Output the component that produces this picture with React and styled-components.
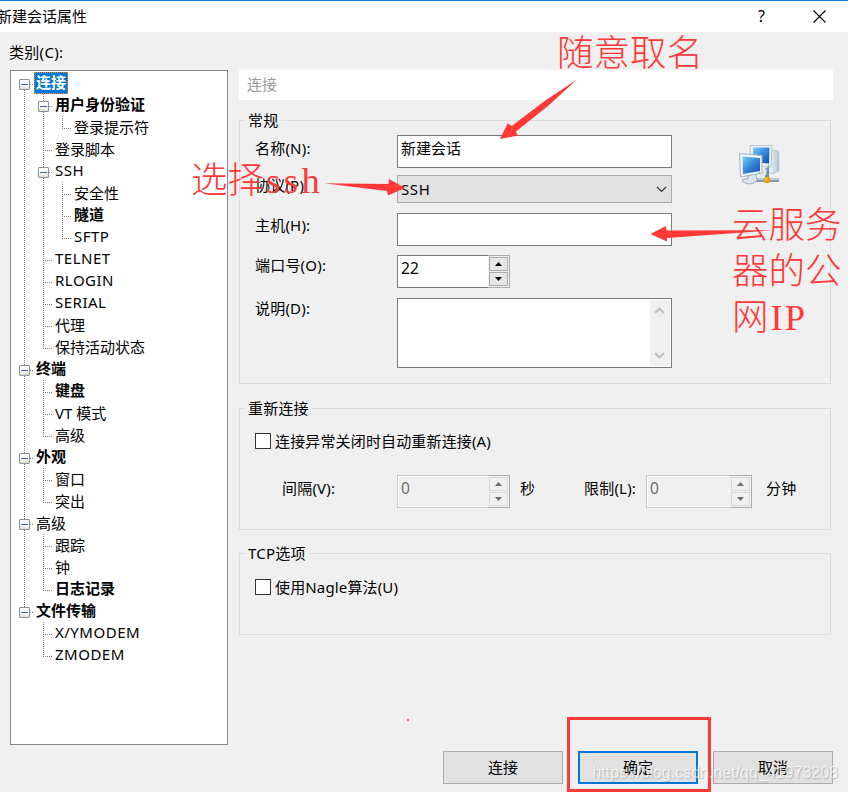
import React from 'react';
import styled, {createGlobalStyle, css} from 'styled-components'

const GlobalStyle = createGlobalStyle`
    * {
        box-sizing: border-box;
    }

    body {
        margin: 0;
        background: #f0f0f0;
        font-family: "Noto Sans", "Noto Sans CJK SC", sans-serif;
        font-size: 15px;
        line-height: 22px;
        color: #000;
        overflow: hidden;
    }
`

const Dialog = styled.div`
    position: relative;
    width: 848px;
    height: 792px;
    overflow: hidden;
    background: #f0f0f0;
    white-space: nowrap;
`

const TitleBar = styled.header`
    display: flex;
    align-items: center;
    justify-content: space-between;
    height: 32px;
    padding: 0 22px 1px 0;
    border-top: 1px solid #1a7dd1;
    background: #fff;
`

const Title = styled.div`
    margin-left: -3px;
    padding-bottom: 1px;
`

const TitleButtons = styled.div`
    display: flex;
    align-items: center;
    gap: 48px;
    font-size: 16px;

    span {
        padding-bottom: 1px;
    }

    svg {
        display: block;
    }
`

const CategoryLabel = styled.div`
    height: 38px;
    padding: 9px 0 0 9px;
    letter-spacing: 0.3px;
`

const Content = styled.div`
    display: flex;
    align-items: flex-start;
    gap: 11px;
    padding-left: 10px;
`

const Tree = styled.div`
    width: 218px;
    height: 675px;
    padding: 1px 0 0 4px;
    border: 1px solid #828790;
    background: #fff;
`

const TreeRow = styled.div`
    display: flex;
    height: 22px;
`

const vertical = 'repeating-linear-gradient(180deg, #808080 0 1px, transparent 1px 2px)'
const horizontal = 'repeating-linear-gradient(90deg, #808080 0 1px, transparent 1px 2px)'

const Guide = styled.div`
    display: flex;
    flex: none;
    width: 19px;
    height: 22px;
    padding: 7px 0 0 4px;
    background-repeat: no-repeat;
    ${({line, branch}) => {
        const start = line === 'bottom' ? 12 : 0
        const size = line === 'none' ? 0 : line === 'full' ? 22 : line === 'top' ? 13 : 10
        return css`
            background-image: ${vertical}, ${horizontal};
            background-position: 9px ${start}px, 9px 12px;
            background-size: 1px ${size}px, ${branch ? 10 : 0}px 1px;
        `
    }}
`

const Expander = styled.div`
    display: flex;
    align-items: center;
    width: 11px;
    height: 11px;
    padding: 0 1px;
    border: 1px solid #919191;
    border-radius: 1px;
    background: linear-gradient(#fff 50%, #dedede);

    &::after {
        content: '';
        width: 7px;
        height: 1px;
        background: #3f5fa8;
    }
`

const TreeLabel = styled.div`
    height: 22px;
    padding: 0 2px;
    font-weight: ${({bold}) => bold ? 700 : 400};
    line-height: ${({bold, latin}) => bold || latin ? 20 : 22}px;
    letter-spacing: ${({latin}) => latin ? 0.5 : 0}px;
    ${({selected}) => selected && css`
        padding: 0 1px;
        border: 1px dotted #ff8728;
        background: #0078d7;
        color: #fff;
        line-height: 18px;
    `}
`

const Panel = styled.main`
    width: 594px;
`

const Banner = styled.div`
    height: 30px;
    margin-bottom: 20px;
    padding: 3px 8px;
    background: #fff;
    color: #9b9b9b;
`

const Group = styled.section`
    width: 592px;
    height: ${({height}) => height}px;
    margin-bottom: ${({gap}) => gap}px;
    border: 1px solid #dcdcdc;
`

const GroupTitle = styled.h3`
    width: max-content;
    height: 22px;
    margin: -12px 0 0 5px;
    padding: 0 3px;
    background: #f0f0f0;
    font-size: 15px;
    font-weight: 400;
    letter-spacing: 0.2px;
`

const General = styled.div`
    display: flex;
    gap: 67px;
    padding: 4px 0 0 15px;
`

const FormRow = styled.div`
    display: grid;
    grid-template-columns: 142px auto;
    justify-content: start;
    margin-bottom: ${({gap}) => gap || 0}px;
`

const Label = styled.label`
    margin-top: ${({offset}) => offset || 0}px;
    letter-spacing: 0.2px;
`

const TextField = styled.div`
    width: 275px;
    height: 33px;
    padding: 1px 3px;
    border: 1px solid #7a7a7a;
    background: #fff;
`

const Combo = styled.div`
    display: flex;
    align-items: center;
    justify-content: space-between;
    width: 275px;
    height: 28px;
    padding: 0 4px 0 3px;
    border: 1px solid #adadad;
    background: #e1e1e1;
    letter-spacing: 0.6px;
`

const TextArea = styled.div`
    display: flex;
    justify-content: flex-end;
    width: 275px;
    height: 70px;
    padding: 1px;
    border: 1px solid #7a7a7a;
    background: #fff;
`

const ScrollBar = styled.div`
    display: flex;
    flex-direction: column;
    align-items: center;
    justify-content: space-between;
    width: 20px;
    padding: 7px 1px 7px 0;
    background: #f0f0f0;
`

const SpinBox = styled.div`
    display: flex;
    width: ${({width}) => width}px;
    height: 33px;
    border: 1px solid ${({disabled}) => disabled ? '#cccccc' : '#7a7a7a'};
    border-right: 0;
    background: ${({disabled}) => disabled ? '#f0f0f0' : '#fff'};
    color: ${({disabled}) => disabled ? '#6d6d6d' : '#000'};
    box-shadow: ${({disabled}) => disabled ? 'inset 1px 1px #fff, inset 0 -1px #fff' : 'none'};
`

const SpinValue = styled.div`
    flex: 1;
    padding: 1px 3px;
    font-size: 15.5px;
    letter-spacing: 0.2px;
`

const SpinButtons = styled.div`
    display: flex;
    flex-direction: column;
    gap: 1px;
    width: 22px;
    height: 33px;
    margin-top: -1px;
    padding: 1px 1px 1px 0;
    border: 1px solid #adadad;
    border-left: 0;
    background: #f0f0f0;
`

const SpinButton = styled.div`
    display: flex;
    flex: 1;
    align-items: center;
    justify-content: center;
    width: 19px;
    margin-left: 1px;
    border: 1px solid ${({disabled}) => disabled ? '#d9d9d9' : '#adadad'};
    background: ${({disabled}) => disabled ? '#f0f0f0' : '#e6e6e6'};
    color: ${({disabled}) => disabled ? '#6d6d6d' : '#000'};
`

const CheckRow = styled.div`
    display: flex;
    align-items: center;
    gap: 4px;
    margin: ${({top}) => top}px 0 0 15px;
    letter-spacing: 0.15px;
`

const CheckBox = styled.div`
    width: 16px;
    height: 16px;
    border: 1px solid #333;
    background: #fff;
`

const IntervalRow = styled.div`
    display: grid;
    grid-template-columns: 115px 123px 64px 62px 120px auto;
    padding: 23px 0 0 42px;

    > span {
        padding-top: 2px;
        letter-spacing: 0.2px;
    }
`

const IconSlot = styled.div`
    padding-top: 10px;
`

const Footer = styled.footer`
    display: flex;
    justify-content: flex-end;
    gap: 15px;
    padding: 6px 15px 0 0;
`

const Button = styled.button`
    width: 120px;
    height: 33px;
    padding: 0 0 1px;
    border: ${({primary}) => primary ? '2px solid #0078d7' : '1px solid #adadad'};
    background: #e1e1e1;
    font: inherit;
    color: #000;
`

const Overlay = styled.div`
    position: absolute;
    inset: 0;
    pointer-events: none;
`

const Arrows = styled.svg`
    position: absolute;
    inset: 0;
`

const Note = styled.div`
    position: absolute;
    left: ${({x}) => x}px;
    top: ${({y}) => y}px;
    color: #ff3838;
    font-family: "Liberation Serif", "Noto Sans CJK SC", serif;
    font-size: 36.5px;
    font-weight: 300;
    line-height: 46px;

    span {
        margin-left: 2px;
        letter-spacing: ${({spacing}) => spacing || 0}px;
    }
`

const Highlight = styled.div`
    position: absolute;
    left: 567px;
    top: 717px;
    width: 144px;
    height: 75px;
    border: 3px solid #ff3838;
`

const Watermark = styled.div`
    position: absolute;
    right: 10px;
    bottom: 8px;
    color: rgba(255, 255, 255, 0.7);
    font-family: "Liberation Sans", sans-serif;
    font-size: 16px;
    text-shadow: 1px 1px 1px rgba(140, 140, 140, 0.5);
`

const nodes = [
    {text: '连接', bold: true, open: true, selected: true, lines: ['bottom']},
    {text: '用户身份验证', bold: true, open: true, lines: ['full', 'full']},
    {text: '登录提示符', lines: ['full', 'full', 'top']},
    {text: '登录脚本', lines: ['full', 'full']},
    {text: 'SSH', latin: true, open: true, lines: ['full', 'full']},
    {text: '安全性', lines: ['full', 'full', 'full']},
    {text: '隧道', bold: true, lines: ['full', 'full', 'full']},
    {text: 'SFTP', latin: true, lines: ['full', 'full', 'top']},
    {text: 'TELNET', latin: true, lines: ['full', 'full']},
    {text: 'RLOGIN', latin: true, lines: ['full', 'full']},
    {text: 'SERIAL', latin: true, lines: ['full', 'full']},
    {text: '代理', lines: ['full', 'full']},
    {text: '保持活动状态', lines: ['full', 'top']},
    {text: '终端', bold: true, open: true, lines: ['full']},
    {text: '键盘', bold: true, lines: ['full', 'full']},
    {text: 'VT 模式', lines: ['full', 'full']},
    {text: '高级', lines: ['full', 'top']},
    {text: '外观', bold: true, open: true, lines: ['full']},
    {text: '窗口', lines: ['full', 'full']},
    {text: '突出', lines: ['full', 'top']},
    {text: '高级', open: true, lines: ['full']},
    {text: '跟踪', lines: ['full', 'full']},
    {text: '钟', lines: ['full', 'full']},
    {text: '日志记录', bold: true, lines: ['full', 'top']},
    {text: '文件传输', bold: true, open: true, lines: ['top']},
    {text: 'X/YMODEM', latin: true, lines: ['none', 'full']},
    {text: 'ZMODEM', latin: true, lines: ['none', 'top']},
]

function TreeNode({node}) {
    const last = node.lines.length - 1
    return (
        <TreeRow>
            {node.lines.map((line, i) => (
                <Guide key={i} line={line} branch={i === last}>
                    {i === last && node.open && <Expander/>}
                </Guide>
            ))}
            <TreeLabel bold={node.bold} latin={node.latin} selected={node.selected}>{node.text}</TreeLabel>
        </TreeRow>
    )
}

function Chevron({up, color, width = 1.2}) {
    return (
        <svg width="11" height="7" viewBox="0 0 11 7" fill="none" stroke={color} strokeWidth={width}>
            <path d={up ? 'M1 6L5.5 1.5L10 6' : 'M1 1L5.5 5.5L10 1'}/>
        </svg>
    )
}

function Spinner({value, width, disabled}) {
    return (
        <SpinBox width={width} disabled={disabled}>
            <SpinValue>{value}</SpinValue>
            <SpinButtons>
                <SpinButton disabled={disabled}>
                    <svg width="7" height="4" fill="currentColor"><path d="M0 4L3.5 0L7 4Z"/></svg>
                </SpinButton>
                <SpinButton disabled={disabled}>
                    <svg width="7" height="4" fill="currentColor"><path d="M0 0H7L3.5 4Z"/></svg>
                </SpinButton>
            </SpinButtons>
        </SpinBox>
    )
}

function ComputersIcon() {
    return (
        <svg width="42" height="42" viewBox="0 0 42 42">
            <defs>
                <linearGradient id="screen" x1="0" y1="0" x2="1" y2="1">
                    <stop offset="0" stopColor="#79d0f2"/>
                    <stop offset="0.45" stopColor="#3a8fdd"/>
                    <stop offset="1" stopColor="#1647b4"/>
                </linearGradient>
                <linearGradient id="tower" x1="0" y1="0" x2="1" y2="0">
                    <stop offset="0" stopColor="#f7fafc"/>
                    <stop offset="1" stopColor="#b3c3d2"/>
                </linearGradient>
            </defs>
            <path d="M31 4.5L37 5.5Q40 6 40 8V26L33 29L29 27Z" fill="url(#tower)" stroke="#b0bfcc" strokeWidth="0.7"/>
            <path d="M35 9L39 9.5M35 12L39 12" stroke="#c9d5df"/>
            <path d="M11 0.5L33 0.5L32 22L12 20Z" fill="#edf3f6" stroke="#aabac4" strokeWidth="0.8"/>
            <path d="M14 2.5H30.5L30 18.5L14 17.5Z" fill="url(#screen)"/>
            <path d="M26 24L30 21V34H26Z" fill="#7890a2"/>
            <path d="M17 35H40" stroke="#869bab" strokeWidth="4"/>
            <path d="M17 34H40" stroke="#c8d4dd" strokeWidth="1.5"/>
            <path d="M9 29L17 28L18 36Q10 42 3 36Q3 33 9 34Z" fill="#dce6ec" stroke="#9cb2c2" strokeWidth="1"/>
            <path d="M20 28L28 24L27 30L20 34Z" fill="#dfe8ed"/>
            <path d="M0.5 8.5L23 10.5V28L1.5 32Z" fill="#f0f5f7" stroke="#9eb0bc" strokeWidth="0.9"/>
            <path d="M3.5 11.5L21 13V26L4 29Z" fill="url(#screen)"/>
            <circle cx="29.5" cy="20.5" r="0.8" fill="#52c443"/>
            <circle cx="20" cy="28" r="0.8" fill="#52c443"/>
            <rect x="25" y="32" width="6" height="6" rx="1.5" fill="#f29a0c"/>
            <rect x="26" y="33" width="2.5" height="2.5" fill="#ffc83e"/>
        </svg>
    )
}

export default function App() {
    return (
        <Dialog>
            <GlobalStyle/>
            <TitleBar>
                <Title>新建会话属性</Title>
                <TitleButtons>
                    <span>?</span>
                    <svg width="13" height="13" stroke="#000" strokeWidth="1.1">
                        <path d="M0.5 0.5L12.5 12.5M12.5 0.5L0.5 12.5"/>
                    </svg>
                </TitleButtons>
            </TitleBar>
            <CategoryLabel>类别(C):</CategoryLabel>
            <Content>
                <Tree>
                    {nodes.map((node, i) => <TreeNode key={i} node={node}/>)}
                </Tree>
                <Panel>
                    <Banner>连接</Banner>
                    <Group height={264} gap={24}>
                        <GroupTitle>常规</GroupTitle>
                        <General>
                            <div>
                                <FormRow gap={7}>
                                    <Label offset={2}>名称(N):</Label>
                                    <TextField>新建会话</TextField>
                                </FormRow>
                                <FormRow gap={10}>
                                    <Label offset={-1}>协议(P):</Label>
                                    <Combo>SSH<Chevron color="#333"/></Combo>
                                </FormRow>
                                <FormRow gap={9}>
                                    <Label offset={1}>主机(H):</Label>
                                    <TextField/>
                                </FormRow>
                                <FormRow gap={10}>
                                    <Label offset={-1}>端口号(O):</Label>
                                    <Spinner value="22" width={113}/>
                                </FormRow>
                                <FormRow>
                                    <Label offset={-1}>说明(D):</Label>
                                    <TextArea>
                                        <ScrollBar>
                                            <Chevron up color="#bfbfbf" width={2}/>
                                            <Chevron color="#bfbfbf" width={2}/>
                                        </ScrollBar>
                                    </TextArea>
                                </FormRow>
                            </div>
                            <IconSlot>
                                <ComputersIcon/>
                            </IconSlot>
                        </General>
                    </Group>
                    <Group height={122} gap={23}>
                        <GroupTitle>重新连接</GroupTitle>
                        <CheckRow top={11}>
                            <CheckBox/>
                            <span>连接异常关闭时自动重新连接(A)</span>
                        </CheckRow>
                        <IntervalRow>
                            <span>间隔(V):</span>
                            <Spinner value="0" width={113} disabled/>
                            <span>秒</span>
                            <span>限制(L):</span>
                            <Spinner value="0" width={106} disabled/>
                            <span>分钟</span>
                        </IntervalRow>
                    </Group>
                    <Group height={82} gap={0}>
                        <GroupTitle>TCP选项</GroupTitle>
                        <CheckRow top={12}>
                            <CheckBox/>
                            <span>使用Nagle算法(U)</span>
                        </CheckRow>
                    </Group>
                </Panel>
            </Content>
            <Footer>
                <Button>连接</Button>
                <Button primary>确定</Button>
                <Button>取消</Button>
            </Footer>
            <Overlay>
                <Arrows width="848" height="792" fill="#ff3838">
                    <path d="M577 79.5L546 100L511.7 126L507.7 123.3L500 139L518 135.5L515.7 131.7L548 106Z"/>
                    <path d="M324 183.3L388.5 184L389 179L405 188L388 195.5L387 191Z"/>
                    <path d="M773 230.3L666.5 230.5L666 226L650.3 234L667 241.5V238Z"/>
                    <circle cx="408" cy="720" r="1"/>
                </Arrows>
                <Note x={557} y={31}>随意取名</Note>
                <Note x={191} y={158} spacing={3.5}>选择<span>ssh</span></Note>
                <Note x={732} y={203} spacing={2}>云服务<br/>器的公<br/>网<span>IP</span></Note>
                <Highlight/>
                <Watermark>https://blog.csdn.net/qq_41973208</Watermark>
            </Overlay>
        </Dialog>
    )
}
